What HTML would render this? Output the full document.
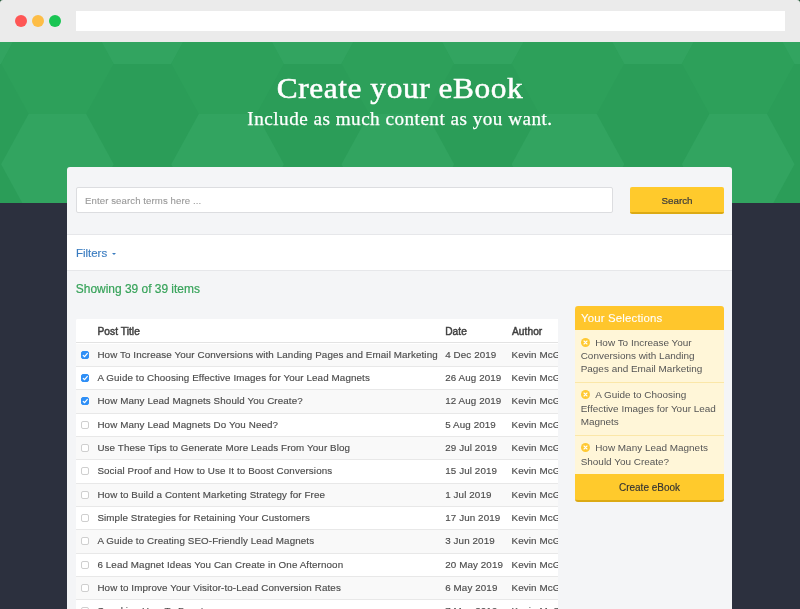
<!DOCTYPE html>
<html><head><meta charset="utf-8"><style>
*{margin:0;padding:0;box-sizing:border-box}
html,body{width:800px;height:609px;overflow:hidden}
body{background:#2c303e;font-family:"Liberation Sans",sans-serif;position:relative;color:#4a4a4a}
.cornerbg{position:absolute;left:0;top:0;width:800px;height:10px;background:#1e5533}
.chrome{position:absolute;left:0;top:0;width:800px;height:42px;background:#ebebeb;border-radius:3px 3px 0 0}
.dot{position:absolute;top:15px;width:12px;height:12px;border-radius:50%}
.url{position:absolute;left:76px;top:11px;width:709px;height:20px;background:#fff}
.hdr{position:absolute;left:0;top:42px;width:800px;height:161px;background:#2b9d58;overflow:hidden}
.hdr svg{position:absolute;left:0;top:0}
.h1{position:absolute;left:0;width:800px;text-align:center;color:#fff;font-family:"Liberation Serif",serif;white-space:nowrap;will-change:transform}
.card{position:absolute;left:67.4px;top:167px;width:665px;height:460px;background:#f4f5f7;border-radius:3px;will-change:transform}
.search{position:absolute;left:9px;top:20px;width:537px;height:26px;background:#fff;border:1px solid #dcdde0;border-radius:2px}
.search span{position:absolute;left:8px;top:7px;font-size:9.6px;letter-spacing:0.1px;color:#999;white-space:nowrap;-webkit-text-stroke:0.1px #999}
.btn{position:absolute;left:563px;top:20px;width:94px;height:27px;background:#ffca2c;border-bottom:2px solid #dcaa14;border-radius:2px;text-align:center;font-size:9.8px;color:#3b3b3b;line-height:27.5px;-webkit-text-stroke:0.2px #3b3b3b}
.filters{position:absolute;left:0;top:67px;width:665px;height:37px;background:#fff;border-top:1px solid #e6e7ea;border-bottom:1px solid #e6e7ea}
.filters span{position:absolute;left:9px;top:11.6px;font-size:11.45px;color:#3a7cc0;white-space:nowrap;-webkit-text-stroke:0.15px #3a7cc0}
.caret{position:absolute;left:45px;top:18px;width:0;height:0;border-left:2.5px solid transparent;border-right:2.5px solid transparent;border-top:2.5px solid #3a7cc0}
.showing{position:absolute;left:8.8px;top:114.7px;font-size:11.95px;color:#37a35a;white-space:nowrap;-webkit-text-stroke:0.2px #37a35a}
.table{position:absolute;left:9px;top:152px;width:482px;height:320px;overflow:hidden;background:#fff;border-radius:2px 0 0 0}
.tr{position:absolute;left:0;width:700px;height:23.83px;border-bottom:1px solid #e8e8e8;background:#fff;font-size:9.8px;letter-spacing:0.11px;color:#4c4c4c;-webkit-text-stroke:0.15px #4c4c4c}
.tr.odd{background:#f9f9f9}
.tr div{position:absolute;top:-1px;white-space:nowrap;line-height:23px}
.c1{left:0;width:17px;height:22px}
.c2{left:21.4px}
.c3{left:369.2px}
.c4{left:435.6px}
.cb{position:absolute;left:4.8px;top:8px;width:8.3px;height:8.3px;border:1px solid #cfcfcf;border-radius:2px;background:#fff}
.cb.on{background:#2f8ff6;border-color:#2f8ff6}
.cb svg{position:absolute;left:-1px;top:-1px}
.th{position:absolute;left:0;top:0;width:700px;height:24px;border-bottom:1px solid #e3e3e3;background:#fff;font-size:10.2px;color:#3f3f3f;letter-spacing:0.05px;-webkit-text-stroke:0.45px #3f3f3f}
.th div{position:absolute;top:0.8px;line-height:24px;white-space:nowrap}
.side{position:absolute;left:508px;top:139px;width:149px}
.side .head{height:24px;background:#ffc62c;border-radius:3px 3px 0 0;color:#fff;font-size:11.4px;letter-spacing:0.18px;padding-left:6px;line-height:24.5px;-webkit-text-stroke:0.1px #fff}
.side .item{background:#fff6d8;border-bottom:1px solid #fbe7a8;padding:5.5px 3px 6.5px 5.7px;font-size:9.95px;line-height:13.3px;color:#555}
.side .x{display:inline-block;vertical-align:-1px;margin-right:5.5px}
.side .cbtn{height:28px;background:#ffca2c;border-bottom:2px solid #dcaa14;border-radius:0 0 3px 3px;text-align:center;color:#333;font-size:10px;line-height:28.6px;-webkit-text-stroke:0.15px #333}
</style></head><body>
<div class="cornerbg"></div>
<div class="chrome">
<div class="dot" style="left:15px;background:#fe5655"></div>
<div class="dot" style="left:32px;background:#fdbd46"></div>
<div class="dot" style="left:49px;background:#19c553"></div>
<div class="url"></div>
</div>
<div class="hdr">
<svg width="800" height="161" viewBox="0 42 800 161"><g>
<polygon fill="#32a460" points="-84.0,13.7 -56.5,-36.6 1.1,-36.6 28.6,13.7 1.1,64.0 -56.5,64.0"/>
<polygon fill="#32a460" points="1.1,164.3 28.6,114.0 86.2,114.0 113.7,164.3 86.2,214.6 28.6,214.6"/>
<polygon fill="#2da05a" points="1.1,63.7 28.6,13.4 86.2,13.4 113.7,63.7 86.2,114.0 28.6,114.0"/>
<polygon fill="#32a460" points="86.2,13.7 113.7,-36.6 171.3,-36.6 198.8,13.7 171.3,64.0 113.7,64.0"/>
<polygon fill="#32a460" points="171.3,164.3 198.8,114.0 256.4,114.0 283.9,164.3 256.4,214.6 198.8,214.6"/>
<polygon fill="#2da05a" points="171.3,63.7 198.8,13.4 256.4,13.4 283.9,63.7 256.4,114.0 198.8,114.0"/>
<polygon fill="#32a460" points="256.4,13.7 283.9,-36.6 341.5,-36.6 369.0,13.7 341.5,64.0 283.9,64.0"/>
<polygon fill="#32a460" points="341.5,164.3 369.0,114.0 426.6,114.0 454.1,164.3 426.6,214.6 369.0,214.6"/>
<polygon fill="#2da05a" points="341.5,63.7 369.0,13.4 426.6,13.4 454.1,63.7 426.6,114.0 369.0,114.0"/>
<polygon fill="#32a460" points="426.6,13.7 454.1,-36.6 511.7,-36.6 539.2,13.7 511.7,64.0 454.1,64.0"/>
<polygon fill="#32a460" points="511.7,164.3 539.2,114.0 596.8,114.0 624.3,164.3 596.8,214.6 539.2,214.6"/>
<polygon fill="#2da05a" points="511.7,63.7 539.2,13.4 596.8,13.4 624.3,63.7 596.8,114.0 539.2,114.0"/>
<polygon fill="#32a460" points="596.8,13.7 624.3,-36.6 681.9,-36.6 709.4,13.7 681.9,64.0 624.3,64.0"/>
<polygon fill="#32a460" points="681.9,164.3 709.4,114.0 767.0,114.0 794.5,164.3 767.0,214.6 709.4,214.6"/>
<polygon fill="#2da05a" points="681.9,63.7 709.4,13.4 767.0,13.4 794.5,63.7 767.0,114.0 709.4,114.0"/>
<polygon fill="#32a460" points="767.0,13.7 794.5,-36.6 852.1,-36.6 879.6,13.7 852.1,64.0 794.5,64.0"/>
</g></svg>
</div>
<div class="h1" style="top:71.6px;font-size:29px;letter-spacing:0.55px;-webkit-text-stroke:0.5px #fff;transform:scaleX(1.08)">Create your eBook</div>
<div class="h1" style="top:109.3px;font-size:18px;letter-spacing:0.45px;-webkit-text-stroke:0.25px #fff;transform:scaleX(1.065)">Include as much content as you want.</div>
<div class="card">
<div class="search"><span>Enter search terms here ...</span></div>
<div class="btn">Search</div>
<div class="filters"><span>Filters</span><div class="caret"></div></div>
<div class="showing">Showing 39 of 39 items</div>
<div class="table">
<div class="th"><div style="left:21.5px">Post Title</div><div style="left:369.2px">Date</div><div style="left:436px">Author</div></div>
<div class="tr odd" style="top:25px;height:23px"><div class="c1"><span class="cb on"><svg width="8.3" height="8.3" viewBox="0 0 9 9"><path d="M2.4 4.7 L3.9 6.2 L6.9 2.6" fill="none" stroke="#fff" stroke-width="1.3" stroke-linecap="round" stroke-linejoin="round"/></svg></span></div><div class="c2">How To Increase Your Conversions with Landing Pages and Email Marketing</div><div class="c3">4 Dec 2019</div><div class="c4">Kevin McGrath</div></div>
<div class="tr" style="top:48px;height:23px"><div class="c1"><span class="cb on"><svg width="8.3" height="8.3" viewBox="0 0 9 9"><path d="M2.4 4.7 L3.9 6.2 L6.9 2.6" fill="none" stroke="#fff" stroke-width="1.3" stroke-linecap="round" stroke-linejoin="round"/></svg></span></div><div class="c2">A Guide to Choosing Effective Images for Your Lead Magnets</div><div class="c3">26 Aug 2019</div><div class="c4">Kevin McGrath</div></div>
<div class="tr odd" style="top:71px;height:24px"><div class="c1"><span class="cb on"><svg width="8.3" height="8.3" viewBox="0 0 9 9"><path d="M2.4 4.7 L3.9 6.2 L6.9 2.6" fill="none" stroke="#fff" stroke-width="1.3" stroke-linecap="round" stroke-linejoin="round"/></svg></span></div><div class="c2">How Many Lead Magnets Should You Create?</div><div class="c3">12 Aug 2019</div><div class="c4">Kevin McGrath</div></div>
<div class="tr" style="top:95px;height:23px"><div class="c1"><span class="cb"></span></div><div class="c2">How Many Lead Magnets Do You Need?</div><div class="c3">5 Aug 2019</div><div class="c4">Kevin McGrath</div></div>
<div class="tr odd" style="top:118px;height:23px"><div class="c1"><span class="cb"></span></div><div class="c2">Use These Tips to Generate More Leads From Your Blog</div><div class="c3">29 Jul 2019</div><div class="c4">Kevin McGrath</div></div>
<div class="tr" style="top:141px;height:24px"><div class="c1"><span class="cb"></span></div><div class="c2">Social Proof and How to Use It to Boost Conversions</div><div class="c3">15 Jul 2019</div><div class="c4">Kevin McGrath</div></div>
<div class="tr odd" style="top:165px;height:23px"><div class="c1"><span class="cb"></span></div><div class="c2">How to Build a Content Marketing Strategy for Free</div><div class="c3">1 Jul 2019</div><div class="c4">Kevin McGrath</div></div>
<div class="tr" style="top:188px;height:23px"><div class="c1"><span class="cb"></span></div><div class="c2">Simple Strategies for Retaining Your Customers</div><div class="c3">17 Jun 2019</div><div class="c4">Kevin McGrath</div></div>
<div class="tr odd" style="top:211px;height:24px"><div class="c1"><span class="cb"></span></div><div class="c2">A Guide to Creating SEO-Friendly Lead Magnets</div><div class="c3">3 Jun 2019</div><div class="c4">Kevin McGrath</div></div>
<div class="tr" style="top:235px;height:23px"><div class="c1"><span class="cb"></span></div><div class="c2">6 Lead Magnet Ideas You Can Create in One Afternoon</div><div class="c3">20 May 2019</div><div class="c4">Kevin McGrath</div></div>
<div class="tr odd" style="top:258px;height:23px"><div class="c1"><span class="cb"></span></div><div class="c2">How to Improve Your Visitor-to-Lead Conversion Rates</div><div class="c3">6 May 2019</div><div class="c4">Kevin McGrath</div></div>
<div class="tr" style="top:281px;height:24px"><div class="c1"><span class="cb"></span></div><div class="c2">Speaking How To Boost</div><div class="c3">7 May 2019</div><div class="c4">Kevin McGrath</div></div>
</div>
<div class="side">
<div class="head">Your Selections</div>
<div class="item"><svg class="x" width="9" height="9" viewBox="0 0 9 9"><circle cx="4.5" cy="4.5" r="4.5" fill="#ffc933"/><path d="M3 3 L6 6 M6 3 L3 6" stroke="#fff" stroke-width="1.1" stroke-linecap="round"/></svg>How To Increase Your Conversions with Landing Pages and Email Marketing</div>
<div class="item"><svg class="x" width="9" height="9" viewBox="0 0 9 9"><circle cx="4.5" cy="4.5" r="4.5" fill="#ffc933"/><path d="M3 3 L6 6 M6 3 L3 6" stroke="#fff" stroke-width="1.1" stroke-linecap="round"/></svg>A Guide to Choosing Effective Images for Your Lead Magnets</div>
<div class="item" style="border-bottom:none"><svg class="x" width="9" height="9" viewBox="0 0 9 9"><circle cx="4.5" cy="4.5" r="4.5" fill="#ffc933"/><path d="M3 3 L6 6 M6 3 L3 6" stroke="#fff" stroke-width="1.1" stroke-linecap="round"/></svg>How Many Lead Magnets Should You Create?</div>
<div class="cbtn">Create eBook</div>
</div>
</div>
</body></html>
